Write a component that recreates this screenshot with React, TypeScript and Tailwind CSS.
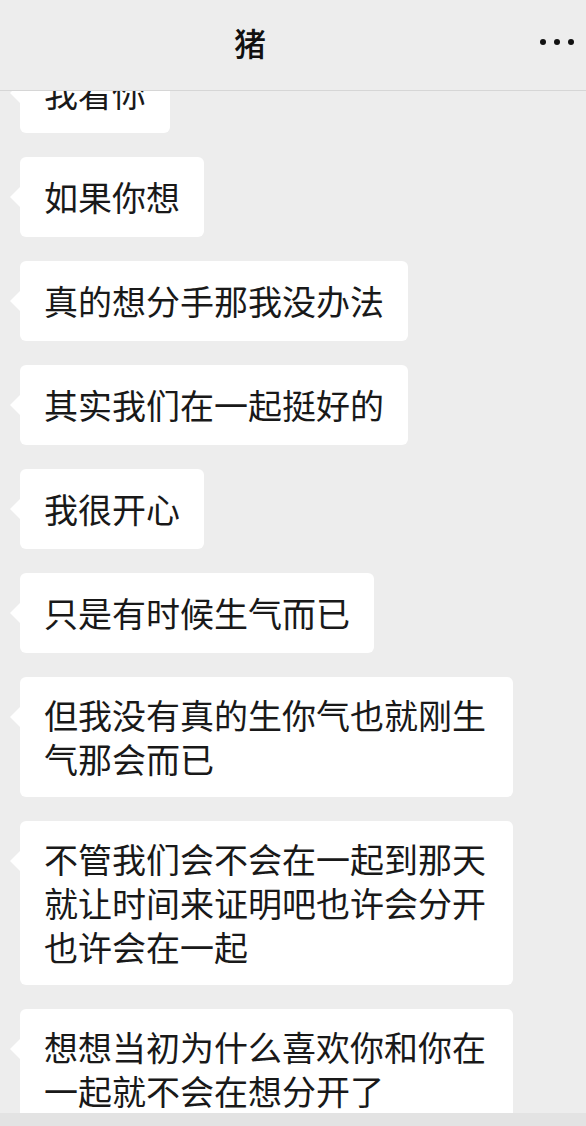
const messages = [
  "我看你",
  "如果你想",
  "真的想分手那我没办法",
  "其实我们在一起挺好的",
  "我很开心",
  "只是有时候生气而已",
  "但我没有真的生你气也就刚生气那会而已",
  "不管我们会不会在一起到那天就让时间来证明吧也许会分开也许会在一起",
  "想想当初为什么喜欢你和你在一起就不会在想分开了",
];

function Bubble({ text }: { text: string }) {
  return (
    <div className="relative flex min-h-[80px] w-fit max-w-[493px] items-center rounded-[6px] bg-white px-[24px] py-4">
      <span className="absolute left-[-10px] top-[30px] h-0 w-0 border-y-[10px] border-r-[10px] border-y-transparent border-r-white" />
      <p className="text-[34px] leading-[44px] text-[#191919]">{text}</p>
    </div>
  );
}

export default function App() {
  return (
    <div
      className="flex h-[1126px] w-[586px] flex-col overflow-hidden bg-[#ededed]"
      style={{ fontFamily: '"Noto Sans CJK SC", "Noto Sans", sans-serif' }}
    >
      <header className="relative z-10 flex h-[91px] shrink-0 items-center border-b border-[#d6d6d6] bg-[#ededed] pb-[6px]">
        <h1 className="pl-[234px] text-[32px] font-medium leading-none text-[#111]">猪</h1>
        <div className="ml-auto mr-[12px] flex items-center gap-[8px]">
          <span className="h-[6px] w-[6px] rounded-full bg-[#111]" />
          <span className="h-[6px] w-[6px] rounded-full bg-[#111]" />
          <span className="h-[6px] w-[6px] rounded-full bg-[#111]" />
        </div>
      </header>
      <main className="flex-1 overflow-hidden">
        <div className="-mt-[38px] flex flex-col gap-[24px] pl-[20px]">
          {messages.map((m, i) => (
            <Bubble key={i} text={m} />
          ))}
        </div>
      </main>
      <div className="h-[13px] shrink-0 bg-[#e3e3e3]" />
    </div>
  );
}
